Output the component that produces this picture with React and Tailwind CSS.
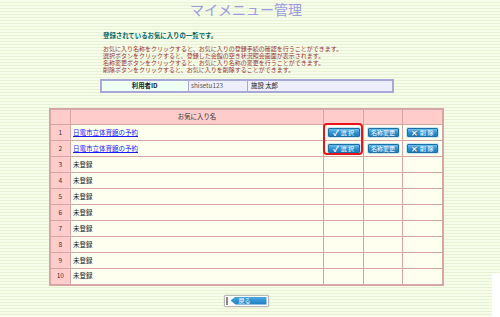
import React from "react";

const JP = { fontFamily: '"Noto Sans CJK JP", "Noto Sans", sans-serif' };

function Btn({ children, w = "w-[32px]" }) {
  return (
    <div
      className={`${w} h-[9px] mx-auto flex items-center justify-center gap-[2px] rounded-[1px] border border-[#1d6fa5] bg-[linear-gradient(to_bottom,#6cc0ec,#2b8fd0_55%,#1f7ec0)] text-white text-[6px] leading-none shadow-[0_0_0_1px_#cfe6f5]`}
    >
      {children}
    </div>
  );
}

function Row({ n, name, fav }) {
  const td = "border border-[#d6a6a6] p-0";
  return (
    <tr className="h-[16px]">
      <td className={`${td} bg-[#ffcccc] text-center text-[#333] text-[6.5px]`}>{n}</td>
      <td className={`${td} bg-[#fffff0] pl-[2px] text-[6.5px] text-[#222]`}>
        {fav ? (
          <span className="text-[#1a1aee] underline">{name}</span>
        ) : (
          <span>未登録</span>
        )}
      </td>
      <td className={`${td} bg-[#fffff0]`}>
        {fav && (
          <Btn>
            <span className="text-[8px] leading-none font-bold">✓</span>
            <span>選 択</span>
          </Btn>
        )}
      </td>
      <td className={`${td} bg-[#fffff0]`}>
        {fav && <Btn w="w-[31px]">名称変更</Btn>}
      </td>
      <td className={`${td} bg-[#fffff0]`}>
        {fav && (
          <Btn w="w-[31px]">
            <span className="text-[8px] leading-none font-bold text-white [text-shadow:0_0_1px_#003]">✕</span>
            <span>削 除</span>
          </Btn>
        )}
      </td>
    </tr>
  );
}

export default function App() {
  const rows = [];
  for (let i = 1; i <= 10; i++) rows.push(i);
  return (
    <div
      style={JP}
      className="w-[500px] h-[317px] overflow-hidden flex bg-[repeating-linear-gradient(to_bottom,#f6fbea_0px,#f6fbea_2px,#e7f3d3_2px,#e7f3d3_3px)]"
    >
      <div className="w-[492px] flex flex-col items-center">
        <h1 className="h-[17px] text-[14px] leading-[18px] text-[#9c9ce0]">
          マイメニュー管理
        </h1>
        <div className="w-full pl-[103px] mt-[15px]">
          <p className="text-[6.4px] leading-[8px] font-bold text-[#00666a]">
            登録されているお気に入りの一覧です。
          </p>
          <div className="mt-[5px] text-[6px] leading-[7px] text-[#993333]">
            <p>お気に入り名称をクリックすると、お気に入りの登録手続の確認を行うことができます。</p>
            <p>選択ボタンをクリックすると、登録した会館の空き状況照会画面が表示されます。</p>
            <p>名称変更ボタンをクリックすると、お気に入り名称の変更を行うことができます。</p>
            <p>削除ボタンをクリックすると、お気に入りを削除することができます。</p>
          </div>
        </div>
        <table className="mt-[6px] ml-[1px] w-[294px] h-[12px] border-collapse border-2 border-[#a8a8d8] text-[6.4px]">
          <tbody>
            <tr>
              <td className="w-[88px] p-0 border border-[#a8a8d8] bg-[#f0fff4] text-center font-bold text-[#222]">
                利用者ID
              </td>
              <td className="w-[59px] p-0 pl-[2px] border border-[#a8a8d8] bg-[#eeeefc] text-[#555]">
                shisetu123
              </td>
              <td className="p-0 pl-[3px] border border-[#a8a8d8] bg-[#eeeefc] text-[#222]">
                施設 太郎
              </td>
            </tr>
          </tbody>
        </table>
        <div className="relative mt-[15px]">
          <table className="w-[393px] border-collapse border-2 border-[#d6a6a6] table-fixed">
            <colgroup>
              <col className="w-[21px]" />
              <col className="w-[253px]" />
              <col className="w-[40px]" />
              <col className="w-[39px]" />
              <col className="w-[40px]" />
            </colgroup>
            <tbody>
              <tr className="h-[16px]">
                <td className="border border-[#d6a6a6] bg-[#ffcccc] p-0"></td>
                <td className="border border-[#d6a6a6] bg-[#ffcccc] p-0 text-center text-[6.4px] text-[#333]">
                  お気に入り名
                </td>
                <td className="border border-[#d6a6a6] bg-[#ffcccc] p-0"></td>
                <td className="border border-[#d6a6a6] bg-[#ffcccc] p-0"></td>
                <td className="border border-[#d6a6a6] bg-[#ffcccc] p-0"></td>
              </tr>
              {rows.map((n) => (
                <Row key={n} n={n} fav={n <= 2} name="日電市立体育館の予約" />
              ))}
            </tbody>
          </table>
          <div className="absolute left-[274px] top-[15px] w-[40px] h-[32px] rounded-[4px] border-2 border-[#e8141c] pointer-events-none"></div>
        </div>
        <div className="mt-[9px] w-[45px] h-[12px] rounded-[2px] border border-[#b8b8b8] bg-white flex items-center p-[1px] shadow-[0_0_1px_#999]">
          <div className="w-[2px] h-full bg-[#8a8a8a]"></div>
          <div className="flex-1 h-full ml-[3px] bg-[linear-gradient(to_bottom,#4aa8de,#1b7cc0)] [clip-path:polygon(5px_0,100%_0,100%_100%,5px_100%,0_50%)] flex items-center pl-[8px] text-[6px] text-white leading-none">
            戻る
          </div>
        </div>
      </div>
      <div className="w-[8px] flex flex-col">
        <div className="h-[273px]"></div>
        <div className="flex-1 bg-white"></div>
      </div>
    </div>
  );
}
